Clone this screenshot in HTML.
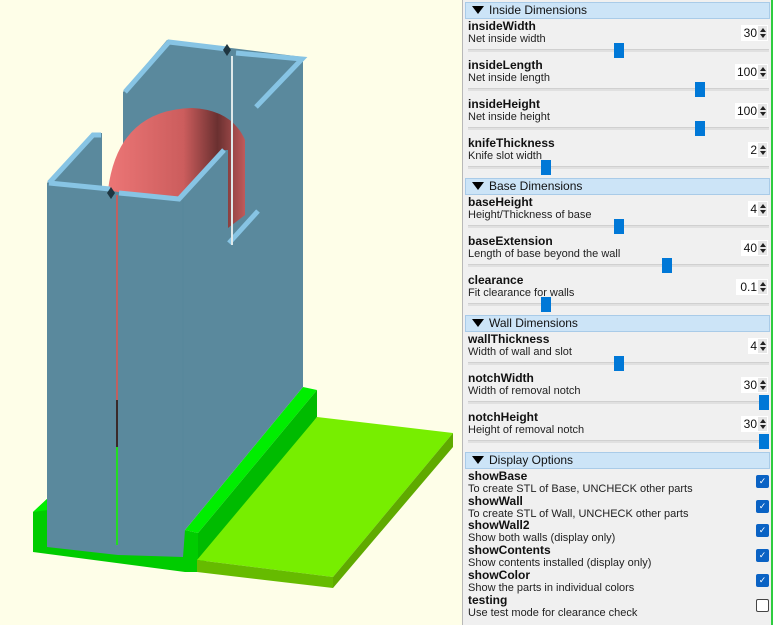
<!DOCTYPE html>
<html><head><meta charset="utf-8"><style>
*{margin:0;padding:0;box-sizing:border-box}
body{width:776px;height:625px;overflow:hidden;background:#fefee8;font-family:"Liberation Sans",sans-serif;position:relative}
#panel{position:absolute;left:462px;top:0;width:310px;height:625px;background:#f0f0f0;border-left:1px solid #b8b8b8;border-right:1px solid #c8c8c8}
#gl{position:absolute;left:771px;top:0;width:2px;height:625px;background:#2ecc40}
#wr{position:absolute;left:773px;top:0;width:3px;height:625px;background:#fff}
.h{position:absolute;left:2px;width:305px;height:17px;background:#cce4f7;border:1px solid #a9cbe8;font-size:12px;line-height:15px;padding-left:6px;color:#111}
.h:before{content:"";display:inline-block;width:0;height:0;border-left:6px solid transparent;border-right:6px solid transparent;border-top:8px solid #000;margin-right:5px;vertical-align:0}
.n{position:absolute;left:5px;font-size:12px;font-weight:bold;color:#111;line-height:13px}
.d{position:absolute;left:5px;font-size:11px;color:#222;line-height:12px}
.t{position:absolute;left:5px;width:301px;height:3px;background:#e0e0e0;border-top:1px solid #d0d0d0}
.k{position:absolute;width:10px;height:15px;background:#0078d7}
.s{position:absolute;height:16px;background:#fff;font-size:12px;line-height:16px;text-align:right;padding-right:11px;color:#111;right:3px}
.s:after{content:"";position:absolute;right:1px;top:1px;width:9px;height:14px;background:#e6e6e6}
.s i{position:absolute;right:2px;width:0;height:0;border-left:3.5px solid transparent;border-right:3.5px solid transparent;z-index:2}
.s i.u{top:3px;border-bottom:4px solid #222}
.s i.w{top:9px;border-top:4px solid #222}
.c{position:absolute;left:293px;width:13px;height:13px;border-radius:2px;background:#0a62c4;color:#fff;font-size:9px;line-height:13px;text-align:center}
.c.o{background:#fff;border:1px solid #444}
</style></head><body>
<svg width="462" height="625" style="position:absolute;left:0;top:0">
<!-- base -->
<polygon points="33,512 48,498 185,520 185,572 33,552" fill="#00cc00"/>
<polygon points="33,512 48,498 48,510" fill="#00ee00"/>
<polygon points="185,530 303,387 317,390 198,533" fill="#00ee00"/>
<polygon points="198,533 317,390 317,417 198,572" fill="#00bb00"/>
<polygon points="185,530 198,533 198,572 185,572" fill="#00cc00"/>
<polygon points="197,560 317,417 453,433 333,577" fill="#77ee00"/>
<polygon points="197,560 333,577 333,588 197,572" fill="#66bb00"/>
<polygon points="333,577 453,433 453,447 333,588" fill="#5faa00"/>
<!-- main blue silhouette -->
<polygon points="123,92 167,40 303,57 303,387 185,530 183,557 118,555 47,547 47,183 92,133 102,133 102,188 123,190" fill="#5a899d"/>
<!-- red contents -->
<defs><linearGradient id="rg" x1="0" x2="1" y1="0" y2="0"><stop offset="0" stop-color="#ec7676"/><stop offset="0.55" stop-color="#cc5d5d"/><stop offset="0.8" stop-color="#6a3030"/><stop offset="1" stop-color="#c05a5a"/></linearGradient></defs>
<path d="M108,190 Q118,110 192,108 Q232,110 245,140 L245,215 L228,228 L228,150 L224,150 L178,197 L118,192 Z" fill="url(#rg)"/>
<!-- rims -->
<g stroke="#87c4e4" stroke-width="5" fill="none" stroke-linejoin="miter">
<path d="M125,92 L169,42 L227,49"/>
<path d="M236,53 L302,59 L256,107"/>
<path d="M229,243 L258,211"/>
<path d="M49,183 L93,135 L101,135"/>
<path d="M49,183 L110,189"/>
<path d="M119,193 L179,199 L224,150"/>
</g>
<line x1="232" y1="56" x2="232" y2="245" stroke="#dfe9ea" stroke-width="2"/>
<line x1="117" y1="195" x2="117" y2="545" stroke="#c06060" stroke-width="2"/>
<line x1="117" y1="400" x2="117" y2="447" stroke="#3a2a2a" stroke-width="2"/>
<line x1="117" y1="447" x2="117" y2="545" stroke="#22dd22" stroke-width="2"/>
<line x1="183" y1="200" x2="183" y2="530" stroke="#56869a" stroke-width="1"/>
<polygon points="111,187 115,193 111,199 107,193" fill="#1e3540"/>
<polygon points="227,44 231,50 227,56 223,50" fill="#1e3540"/>
</svg>
<div id="panel">
<div class="h" style="top:2px">Inside Dimensions</div>
<div class="n" style="top:20px">insideWidth</div><div class="d" style="top:33px">Net inside width</div><div class="s" style="top:25px;width:27px">30<i class="u"></i><i class="w"></i></div><div class="t" style="top:49px"></div><div class="k" style="left:151px;top:43px"></div>
<div class="n" style="top:59px">insideLength</div><div class="d" style="top:72px">Net inside length</div><div class="s" style="top:64px;width:33px">100<i class="u"></i><i class="w"></i></div><div class="t" style="top:88px"></div><div class="k" style="left:232px;top:82px"></div>
<div class="n" style="top:98px">insideHeight</div><div class="d" style="top:111px">Net inside height</div><div class="s" style="top:103px;width:33px">100<i class="u"></i><i class="w"></i></div><div class="t" style="top:127px"></div><div class="k" style="left:232px;top:121px"></div>
<div class="n" style="top:137px">knifeThickness</div><div class="d" style="top:150px">Knife slot width</div><div class="s" style="top:142px;width:20px">2<i class="u"></i><i class="w"></i></div><div class="t" style="top:166px"></div><div class="k" style="left:78px;top:160px"></div>
<div class="h" style="top:178px">Base Dimensions</div>
<div class="n" style="top:196px">baseHeight</div><div class="d" style="top:209px">Height/Thickness of base</div><div class="s" style="top:201px;width:20px">4<i class="u"></i><i class="w"></i></div><div class="t" style="top:225px"></div><div class="k" style="left:151px;top:219px"></div>
<div class="n" style="top:235px">baseExtension</div><div class="d" style="top:248px">Length of base beyond the wall</div><div class="s" style="top:240px;width:27px">40<i class="u"></i><i class="w"></i></div><div class="t" style="top:264px"></div><div class="k" style="left:199px;top:258px"></div>
<div class="n" style="top:274px">clearance</div><div class="d" style="top:287px">Fit clearance for walls</div><div class="s" style="top:279px;width:32px">0.1<i class="u"></i><i class="w"></i></div><div class="t" style="top:303px"></div><div class="k" style="left:78px;top:297px"></div>
<div class="h" style="top:315px">Wall Dimensions</div>
<div class="n" style="top:333px">wallThickness</div><div class="d" style="top:346px">Width of wall and slot</div><div class="s" style="top:338px;width:20px">4<i class="u"></i><i class="w"></i></div><div class="t" style="top:362px"></div><div class="k" style="left:151px;top:356px"></div>
<div class="n" style="top:372px">notchWidth</div><div class="d" style="top:385px">Width of removal notch</div><div class="s" style="top:377px;width:27px">30<i class="u"></i><i class="w"></i></div><div class="t" style="top:401px"></div><div class="k" style="left:296px;top:395px"></div>
<div class="n" style="top:411px">notchHeight</div><div class="d" style="top:424px">Height of removal notch</div><div class="s" style="top:416px;width:27px">30<i class="u"></i><i class="w"></i></div><div class="t" style="top:440px"></div><div class="k" style="left:296px;top:434px"></div>
<div class="h" style="top:452px">Display Options</div>
<div class="n" style="top:470px">showBase</div><div class="d" style="top:483px">To create STL of Base, UNCHECK other parts</div><div class="c" style="top:475px">✓</div>
<div class="n" style="top:495px">showWall</div><div class="d" style="top:508px">To create STL of Wall, UNCHECK other parts</div><div class="c" style="top:500px">✓</div>
<div class="n" style="top:519px">showWall2</div><div class="d" style="top:532px">Show both walls (display only)</div><div class="c" style="top:524px">✓</div>
<div class="n" style="top:544px">showContents</div><div class="d" style="top:557px">Show contents installed (display only)</div><div class="c" style="top:549px">✓</div>
<div class="n" style="top:569px">showColor</div><div class="d" style="top:582px">Show the parts in individual colors</div><div class="c" style="top:574px">✓</div>
<div class="n" style="top:594px">testing</div><div class="d" style="top:607px">Use test mode for clearance check</div><div class="c o" style="top:599px"></div>
</div>
<div id="gl"></div><div id="wr"></div>
</body></html>
